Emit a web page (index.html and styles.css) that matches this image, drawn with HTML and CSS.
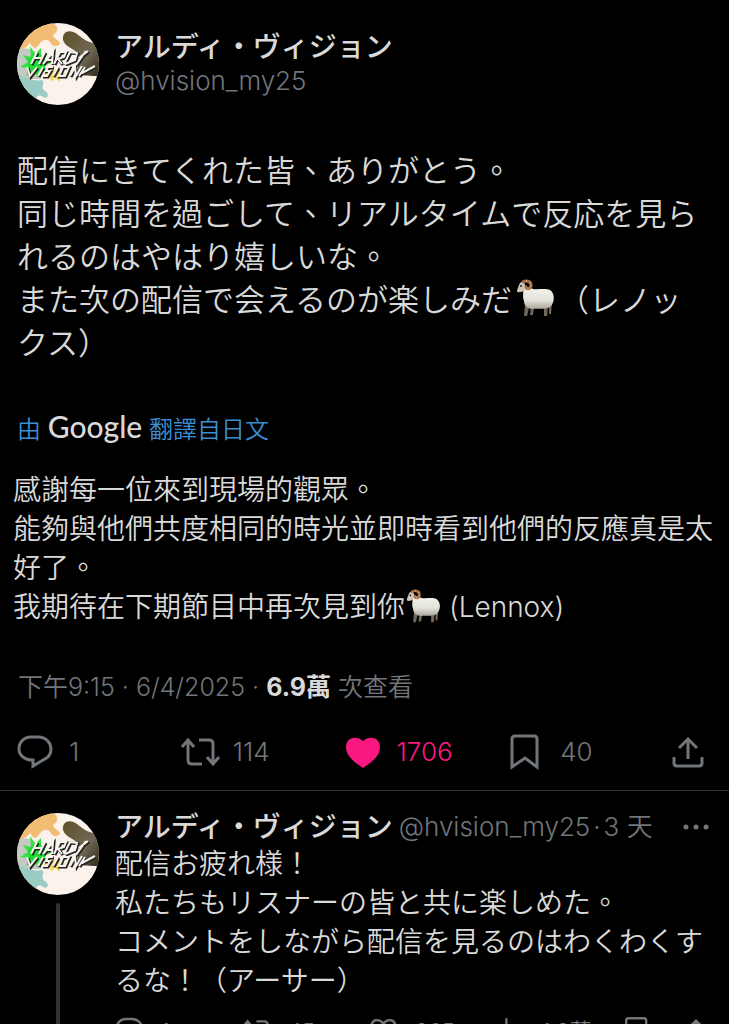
FILE: index.html
```html
<!DOCTYPE html>
<html lang="zh-Hant">
<head>
    <meta charset="UTF-8">
    <meta name="viewport" content="width=device-width, initial-scale=1">
    <title>アルディ・ヴィジョン</title>
    <link rel="stylesheet" href="styles.css">
</head>
<body>
<!-- 共用圖示 -->
<svg class="sprite" aria-hidden="true">
    <defs>
        <clipPath id="round"><circle cx="41" cy="41" r="41"/></clipPath>
        <linearGradient id="brown" x1="0" y1="0" x2="1" y2="1">
            <stop offset="0" stop-color="#5d5128"/>
            <stop offset="0.6" stop-color="#716654"/>
            <stop offset="1" stop-color="#2f2818"/>
        </linearGradient>
        <linearGradient id="wool" x1="0" y1="0" x2="0" y2="1">
            <stop offset="0" stop-color="#f4f3ec"/>
            <stop offset="0.6" stop-color="#e3e2da"/>
            <stop offset="1" stop-color="#aaa79b"/>
        </linearGradient>
        <path id="logo-lines" d="M20 29L14 41M28 29L22 41M17 35H25M26 41L36 29L35 41M30 37H35M37 41L43 29H49L47 34L41 36L45 41M47 41L53 29L60 30L58 37L48 41M69 28L59 42M62 35L71 28M10 44L13 53L20 44M26 44L21 53M36 44H31L29 48H33L30 53H25M41 44L36 53M46 44H52L48 53H42L46 44M53 53L58 44L59 53L65 43M68 44L62 53M65 50L78 43"/>
    </defs>
    <symbol id="avatar" viewBox="0 0 82 82">
        <g clip-path="url(#round)">
            <rect width="82" height="82" fill="#fbf2ec"/>
            <path d="M0 30C6 26 10 24 13 20C16 24 17 27 21 23C25 16 30 15 33 19C35 24 40 24 43 21C43 17 36 16 36 12C41 9 43 3 35 0H0Z" fill="#f1bd74"/>
            <path d="M0 27C9 24 15 26 22 31L24 56H0Z" fill="#c5c9c3"/>
            <path d="M46 17C45 8 53 6 60 11C67 17 71 19 82 22V53C72 53 67 52 60 53L62 34C60 25 49 26 46 17Z" fill="url(#brown)"/>
            <path d="M0 52C8 54 16 59 25 57C29 60 22 65 28 68C33 71 31 77 26 74C21 70 17 75 20 82H0Z" fill="#9accc6"/>
            <path d="M33 42L38 47L43 43L43 49L50 51L43 53L43 59L38 55L34 59L33 53L26 52L33 48Z" fill="#f6d65c"/>
            <path d="M13 23L18 31L24 25L24 33L30 30L27 37L34 40L27 43L31 49L23 47L21 55L17 48L9 53L12 45L3 44L11 39L6 32L14 34Z" fill="#2de43d"/>
            <circle cx="20" cy="40" r="9" fill="#1edb35"/>
            <g fill="none">
                <use href="#logo-lines" x="1" y="1" stroke="#24231f" stroke-width="3"/>
                <use href="#logo-lines" stroke="#f5f4ef" stroke-width="2"/>
            </g>
        </g>
    </symbol>
    <symbol id="ram" viewBox="0 0 40 40">
        <path d="M10 25L9 37H12L14 29M16 27L15 36H18L19 28M29 27L29 37H32L33 26M34 25L34 35H36L37 23" fill="#72675a"/>
        <path d="M8 9C10 7 15 8 18 10C23 11 30 9 35 11C41 15 39 25 35 28C29 31 22 29 18 30C12 30 9 26 9 22C7 18 9 14 8 9Z" fill="url(#wool)"/>
        <path d="M9 3C5 2 4 6 3 9C1 12 2 14 5 13C8 13 9 12 11 9Z" fill="#cfc4b6"/>
        <circle cx="6" cy="7" r="1" fill="#2a211b"/>
        <path d="M8 3C11 1 16 2 16 6C16 10 12 11 11 8" fill="none" stroke="#a96f44" stroke-width="3" stroke-linecap="round"/>
        <path d="M11 1L12 3M16 3L14 5M17 7L15 7M13 11L13 9" stroke="#d6a678" stroke-width="1"/>
    </symbol>
    <symbol id="reply" viewBox="0 0 40 40">
        <path d="M14 5H21C29 5 34 11 34 17C34 22 31 26 26 28L16 34V28C7 28 2 23 2 17C2 10 7 5 14 5Z" fill="none" stroke="currentColor" stroke-width="3"/>
    </symbol>
    <symbol id="retweet" viewBox="0 0 40 40">
        <path d="M1 15L7 8L13 15M7 9V28Q7 32 11 32H21M18 8H28Q32 8 32 12V31M26 25L32 32L38 25" fill="none" stroke="currentColor" stroke-width="3"/>
    </symbol>
    <symbol id="heart" viewBox="0 0 40 40">
        <path d="M18 36C9 30 1 24 1 15C1 5 12 3 18 9C24 3 35 5 35 15C35 24 27 30 18 36Z" fill="currentColor"/>
    </symbol>
    <symbol id="heart-line" viewBox="0 0 40 40">
        <path d="M18 34C9 29 3 22 3 15C3 5 13 4 18 11C23 4 33 5 33 15C33 22 27 29 18 34Z" fill="none" stroke="currentColor" stroke-width="3"/>
    </symbol>
    <symbol id="views" viewBox="0 0 40 40">
        <path d="M5 34V18M13 34V4M21 34V14M29 34V22" fill="none" stroke="currentColor" stroke-width="3"/>
    </symbol>
    <symbol id="bookmark" viewBox="0 0 40 40">
        <path d="M4 35V7Q4 4 7 4H26Q29 4 29 7V35L17 26Z" fill="none" stroke="currentColor" stroke-width="3"/>
    </symbol>
    <symbol id="share" viewBox="0 0 32 40">
        <path d="M2 25V31Q2 34 5 34H27Q30 34 30 31V25M16 27V7M7 16L16 7L25 16" fill="none" stroke="currentColor" stroke-width="3"/>
    </symbol>
</svg>

<main class="page">
    <article class="tweet">
        <header class="author">
            <svg class="avatar" role="img" aria-label="HARDI VISION"><use href="#avatar"/></svg>
            <div class="author-names">
                <a class="name" href="#">アルディ・ヴィジョン</a>
                <a class="handle" href="#">@hvision_my25</a>
            </div>
        </header>

        <p class="tweet-text">配信にきてくれた皆、ありがとう。<br>同じ時間を過ごして、リアルタイムで反応を見られるのはやはり嬉しいな。<br>また次の配信で会えるのが楽しみだ<svg class="emoji" role="img" aria-label="🐏"><use href="#ram"/></svg>（レノックス）</p>

        <p class="translated-by"><a href="#">由 <span class="google">Google</span> 翻譯自日文</a></p>

        <p class="translation">感謝每一位來到現場的觀眾。<br>能夠與他們共度相同的時光並即時看到他們的反應真是太好了。<br>我期待在下期節目中再次見到你<svg class="emoji emoji-small" role="img" aria-label="🐏"><use href="#ram"/></svg> (Lennox)</p>

        <p class="meta">下午9:15 · 6/4/2025 · <strong>6.9萬</strong> 次查看</p>

        <div class="actions">
            <button type="button" aria-label="回覆"><svg><use href="#reply"/></svg><span>1</span></button>
            <button type="button" aria-label="轉發"><svg><use href="#retweet"/></svg><span>114</span></button>
            <button type="button" class="liked" aria-label="喜歡"><svg><use href="#heart"/></svg><span>1706</span></button>
            <button type="button" aria-label="書籤"><svg><use href="#bookmark"/></svg><span>40</span></button>
            <button type="button" aria-label="分享"><svg class="share"><use href="#share"/></svg></button>
        </div>
    </article>

    <article class="comment">
        <div class="comment-side">
            <svg class="avatar" role="img" aria-label="HARDI VISION"><use href="#avatar"/></svg>
            <div class="thread-line"></div>
        </div>
        <div class="comment-main">
            <header class="comment-header">
                <a class="name" href="#">アルディ・ヴィジョン</a>
                <span class="byline"><a class="handle" href="#">@hvision_my25</a>·<time>3 天</time></span>
                <button type="button" class="more" aria-label="更多">
                    <svg viewBox="0 0 26 6"><circle cx="3" cy="3" r="2.5"/><circle cx="13" cy="3" r="2.5"/><circle cx="23" cy="3" r="2.5"/></svg>
                </button>
            </header>
            <p class="comment-text">配信お疲れ様！<br>私たちもリスナーの皆と共に楽しめた。<br>コメントをしながら配信を見るのはわくわくするな！（アーサー）</p>
            <div class="actions actions-small">
                <button type="button" aria-label="回覆"><svg><use href="#reply"/></svg><span>1</span></button>
                <button type="button" aria-label="轉發"><svg><use href="#retweet"/></svg><span>45</span></button>
                <button type="button" aria-label="喜歡"><svg><use href="#heart-line"/></svg><span>265</span></button>
                <button type="button" aria-label="查看次數"><svg><use href="#views"/></svg><span>1.8萬</span></button>
                <button type="button" aria-label="書籤"><svg><use href="#bookmark"/></svg></button>
                <button type="button" aria-label="分享"><svg class="share"><use href="#share"/></svg></button>
            </div>
        </div>
    </article>
</main>
</body>
</html>
```
FILE: styles.css
```css
* {
    margin: 0;
    padding: 0;
    box-sizing: border-box;
}

body {
    background-color: #000000;
    color: #d9d9d9;
    font-family: Inter, "Noto Sans CJK TC", sans-serif;
    font-weight: 350;
}

a {
    color: inherit;
    text-decoration: none;
}

button {
    border: none;
    background: none;
    color: inherit;
    font: inherit;
    cursor: pointer;
}

.sprite {
    position: absolute;
    width: 0;
    height: 0;
}

.page {
    height: 100vh;
    overflow: hidden;
}

/*主推文*/
.tweet {
    padding-top: 23px;
    border-bottom: 1px solid #2f3336;
}

.author {
    display: flex;
    gap: 16px;
    padding: 0 17px;
}

.avatar {
    display: block;
    flex: none;
    width: 82px;
    height: 82px;
}

.author-names {
    display: flex;
    flex-direction: column;
    padding-top: 7px;
}

.name {
    font-size: 28px;
    line-height: 34px;
    font-weight: 500;
}

.handle,
.byline {
    font-size: 26px;
    line-height: 34px;
    color: #71767b;
}

.tweet-text {
    padding: 0 17px;
    margin-top: 44px;
    font-size: 31px;
    line-height: 43px;
}

.emoji {
    width: 40px;
    height: 40px;
    margin: 0 3px;
    vertical-align: -8px;
}

.emoji-small {
    width: 36px;
    height: 36px;
    margin: 0;
}

.translated-by {
    padding: 0 17px;
    margin-top: 45px;
    font-size: 24px;
    line-height: 34px;
    color: #3b8fd0;
}

.google {
    color: #d9d9d9;
    font-family: Lato, sans-serif;
    font-size: 30px;
    font-weight: 500;
    line-height: 34px;
}

.translation {
    padding: 0 13px;
    margin-top: 24px;
}

.translation,
.comment-text {
    font-size: 28px;
    line-height: 39px;
}

.meta {
    padding: 0 18px;
    margin-top: 43px;
    font-size: 25px;
    line-height: 34px;
    color: #71767b;
}

.meta strong {
    color: #d9d9d9;
    font-weight: 700;
}

/*互動按鈕*/
.actions {
    display: grid;
    grid-template-columns: repeat(4, 1fr) auto;
    padding: 0 25px 18px 17px;
    margin-top: 28px;
    color: #71767b;
}

.actions button {
    display: flex;
    align-items: center;
    gap: 12px;
    font-size: 26px;
    line-height: 40px;
}

.actions svg {
    flex: none;
    width: 40px;
    height: 40px;
}

.actions .share {
    width: 32px;
}

.actions .liked {
    color: #f91880;
}

/*回覆*/
.comment {
    display: flex;
    gap: 16px;
    padding: 0 20px 0 17px;
}

.comment-side {
    display: flex;
    flex-direction: column;
    align-items: center;
    gap: 8px;
    padding-top: 22px;
}

.thread-line {
    flex: 1;
    width: 4px;
    border-radius: 2px 2px 0 0;
    background-color: #2f3336;
}

.comment-main {
    flex: 1;
    padding-top: 17px;
}

.comment-header {
    display: flex;
    align-items: center;
    gap: 6px;
    height: 37px;
    white-space: nowrap;
}

.byline {
    display: flex;
    gap: 3px;
}

.more {
    display: flex;
    margin-left: auto;
}

.more svg {
    width: 26px;
    height: 6px;
    fill: #71767b;
}

.actions-small {
    grid-template-columns: repeat(4, 1fr) 60px auto;
    padding: 0 0 18px;
    margin-top: 14px;
}

.actions-small button {
    gap: 14px;
    font-size: 22px;
    line-height: 32px;
}

.actions-small svg {
    width: 32px;
    height: 32px;
}

.actions-small .share {
    width: 26px;
}
```
